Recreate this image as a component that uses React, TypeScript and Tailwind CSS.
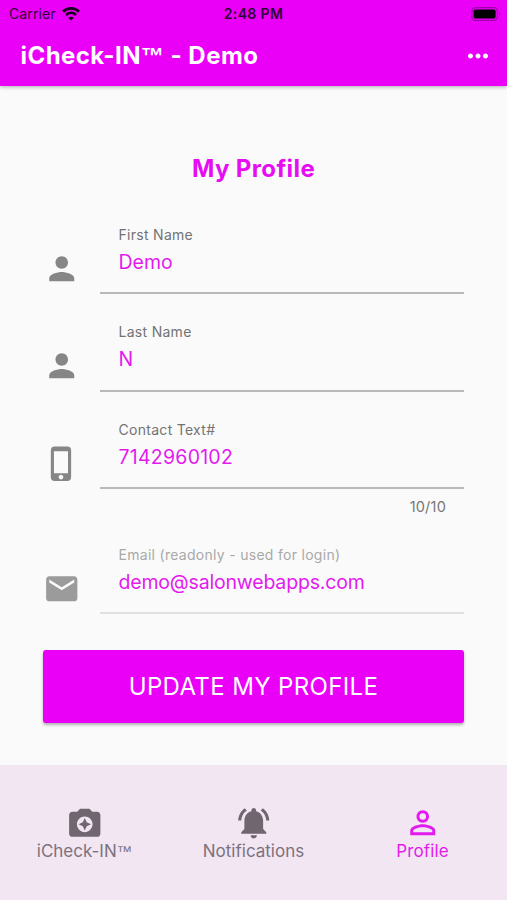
import type { ReactNode } from "react";
import {
  MdCameraEnhance,
  MdEmail,
  MdMoreHoriz,
  MdNotificationsActive,
  MdPerson,
  MdPersonOutline,
  MdPhoneIphone,
} from "react-icons/md";

function StatusBar() {
  return (
    <div className="grid h-[27px] grid-cols-3 items-center px-[6px] text-[14px] text-[#300038]">
      <div className="flex items-center gap-[6px] pl-[3px]">
        <span className="tracking-[0.1px]">Carrier</span>
        <svg className="h-[14px] w-[18px]" viewBox="0 0 18 14" fill="none" stroke="#17001b" strokeWidth="2.6">
          <path d="M1 4.7C5.5.3 12.500.3 17 4.700" />
          <path d="M4 8C6.900 5.200 11.100 5.200 14 8" />
          <path d="M6.300 10.800C7.800 9.300 10.200 9.300 11.700 10.800L9 13.700Z" fill="#17001b" stroke="none" />
        </svg>
      </div>
      <span className="text-center text-[14px] font-semibold tracking-[0.35px]">2:48 PM</span>
      <svg className="h-[14px] w-[30px] justify-self-end" viewBox="0 0 30 14">
        <rect x="0.900" y="0.700" width="25.500" height="12.600" rx="3.600" fill="none" stroke="#a000aa" strokeWidth="1.200" />
        <rect x="2.600" y="2.500" width="22" height="9" rx="1.800" fill="#000" />
        <path d="M28 4.800Q30.300 7 28 9.200Z" fill="#a000aa" />
      </svg>
    </div>
  );
}

type FieldProps = {
  icon: ReactNode;
  label: string;
  value: string;
  valueClass: string;
  counter?: string;
  readOnly?: boolean;
};

function Field({ icon, label, value, valueClass, counter, readOnly }: FieldProps) {
  return (
    <div className={counter ? "flex h-[125px]" : "flex h-[97.7px]"}>
      <div className={readOnly ? "w-[57px] pt-[31.500px] text-[#9b9b9b]" : "w-[57px] pt-[31.500px] text-[#868686]"}>{icon}</div>
      <div className="flex-1">
        <div
          className={
            readOnly
              ? "h-[76px] border-b-2 border-[#e0e0e0] pl-[18.500px] pt-[7.500px]"
              : "h-[76px] border-b-2 border-[#b9b9b9] pl-[18.500px] pt-[7.500px]"
          }
        >
          <div
            className={
              readOnly
                ? "text-[14px] leading-[18px] tracking-[0.29px] text-[#a9a9a9]"
                : "text-[14px] leading-[18px] tracking-[0.29px] text-[#737373]"
            }
          >
            {label}
          </div>
          <div className={`mt-[4px] text-[19.500px] leading-[28px] text-[#e31aee] ${valueClass}`}>{value}</div>
        </div>
        {counter && (
          <div className="pr-[18px] pt-[9px] text-right text-[14.500px] leading-[18px] tracking-[0.2px] text-[#777]">{counter}</div>
        )}
      </div>
    </div>
  );
}

function Tab({ icon, label, active }: { icon: ReactNode; label: ReactNode; active?: boolean }) {
  return (
    <div className={active ? "flex flex-col items-center pt-[39px] text-[#e31aee]" : "flex flex-col items-center pt-[39px] text-[#6f6670]"}>
      {icon}
      <span
        className={
          active
            ? "-mt-px text-[17px] leading-[20px] tracking-[0.1px]"
            : "-mt-px text-[17px] leading-[20px] text-[#7c727d]"
        }
      >
        {label}
      </span>
    </div>
  );
}

export default function App() {
  return (
    <div className="flex h-[900px] w-[507px] flex-col overflow-hidden bg-[#fafafa] font-['Inter',sans-serif]">
      <header className="h-[86px] bg-[#eb00f7] shadow-[0_1px_4px_rgba(0,0,0,0.3)]">
        <StatusBar />
        <div className="flex h-[58px] items-center justify-between pl-[20.500px] pr-[14.500px] text-white">
          <h1 className="text-[24px] font-bold leading-[32px] tracking-[0.45px]">
            iCheck-IN<span className="font-['Liberation_Sans',sans-serif] text-[23px] font-bold leading-none">™</span> - Demo
          </h1>
          <MdMoreHoriz size={30} />
        </div>
      </header>

      <main className="flex-1 px-[43px] pt-[64px]">
        <h2 className="pt-px text-center text-[24px] font-bold leading-[36px] tracking-[0.4px] text-[#e60df2]">My Profile</h2>
        <div className="mt-[31px]">
          <Field icon={<MdPerson size={37.5} />} label="First Name" value="Demo" valueClass="tracking-[0px]" />
          <Field icon={<MdPerson size={37.5} />} label="Last Name" value="N" valueClass="tracking-[0px]" />
          <Field
            icon={<MdPhoneIphone size={37.5} />}
            label="Contact Text#"
            value="7142960102"
            valueClass="tracking-[0.25px]"
            counter="10/10"
          />
          <Field
            icon={<MdEmail size={37.5} />}
            label="Email (readonly - used for login)"
            value="demo@salonwebapps.com"
            valueClass="tracking-[-0.18px]"
            readOnly
          />
        </div>
        <button className="mt-[14px] h-[73px] w-full rounded-[3px] bg-[#eb00f7] text-[24px] tracking-[0.37px] text-white shadow-[0_2px_3px_rgba(0,0,0,0.3)]">
          UPDATE MY PROFILE
        </button>
      </main>

      <nav className="grid h-[135px] grid-cols-3 bg-[#f3e6f3]">
        <Tab
          icon={<MdCameraEnhance size={37.5} />}
          label={
            <>
              iCheck-IN<span className="font-['Liberation_Sans',sans-serif] text-[15.500px] leading-none">™</span>
            </>
          }
        />
        <Tab icon={<MdNotificationsActive size={37.5} />} label="Notifications" />
        <Tab icon={<MdPersonOutline size={37.5} />} label="Profile" active />
      </nav>
    </div>
  );
}
